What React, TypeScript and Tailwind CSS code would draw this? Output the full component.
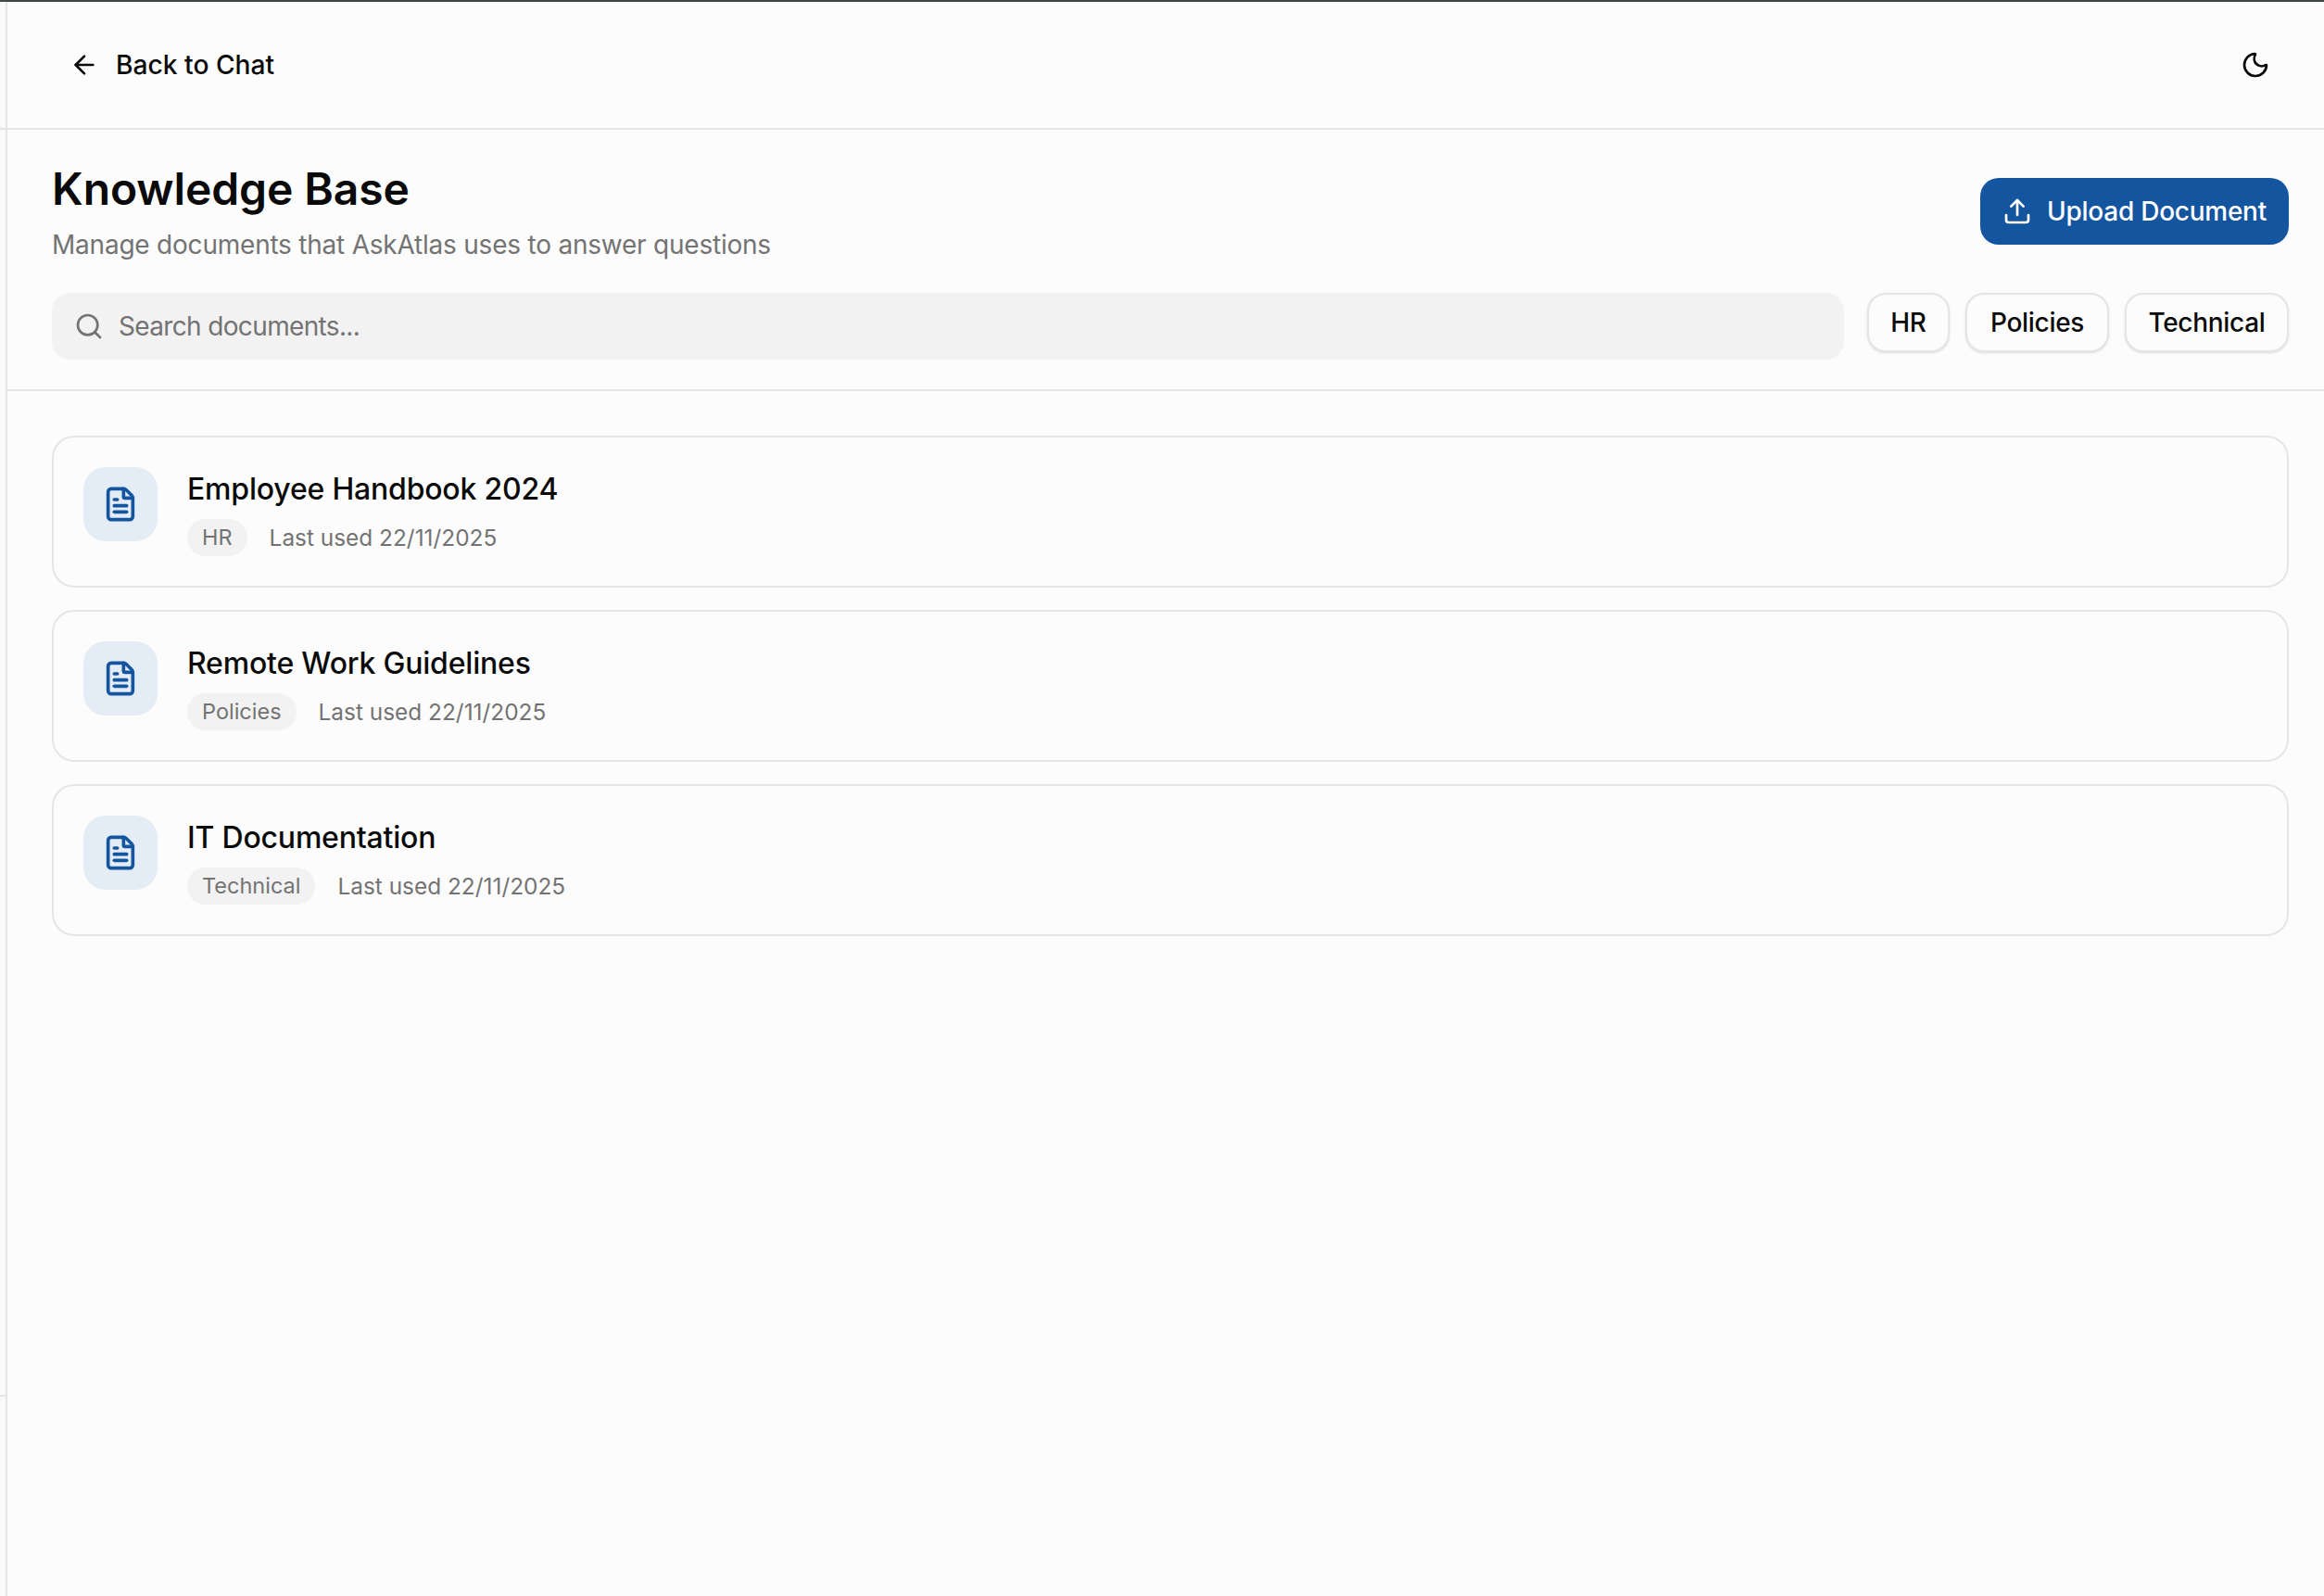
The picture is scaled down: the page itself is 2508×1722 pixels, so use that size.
import React from "react";
import { ArrowLeft, Moon, Search, Upload, FileText } from "lucide-react";

const docs = [
  { name: "Employee Handbook 2024", tag: "HR" },
  { name: "Remote Work Guidelines", tag: "Policies" },
  { name: "IT Documentation", tag: "Technical" },
];

const filters = [
  { label: "HR", width: "w-[89px]" },
  { label: "Policies", width: "w-[155px]" },
  { label: "Technical", width: "w-[177px]" },
];

const App = () => {
  return (
    <div className="h-[1722px] w-[2508px] overflow-hidden flex flex-col bg-[#fcfcfc] text-[#0a0a0a] font-['Inter',sans-serif]">
      <div className="h-[2px] bg-[#3f4a48] shrink-0" />
      <div className="flex flex-1 min-h-0">
        {/* collapsed sidebar edge */}
        <aside className="w-[8px] shrink-0 flex flex-col bg-[#fafafa] border-r-2 border-[#e5e5e5]">
          <div className="h-[138px] border-b-2 border-[#e5e5e5] shrink-0" />
          <div className="h-[1367px] border-b-2 border-[#e5e5e5] shrink-0" />
        </aside>

        <main className="flex-1 min-w-0 flex flex-col">
          <header className="h-[138px] shrink-0 border-b-2 border-[#e5e5e5] pl-[67px] pr-[58px] flex items-center justify-between">
            <div className="flex items-center gap-[18px]">
              <ArrowLeft size={32} strokeWidth={2} />
              <span className="text-[28.2px] font-medium">Back to Chat</span>
            </div>
            <Moon size={32} strokeWidth={2} />
          </header>

          <section className="h-[282px] shrink-0 border-b-2 border-[#e5e5e5] pl-[48px] pr-[38px] pt-[36px]">
            <div className="flex items-start justify-between">
              <div>
                <h1 className="text-[48px] leading-[56px] font-semibold tracking-[-0.1px]">Knowledge Base</h1>
                <p className="mt-[12px] text-[28px] leading-[40px] tracking-[-0.22px] text-[#737373]">
                  Manage documents that AskAtlas uses to answer questions
                </p>
              </div>
              <button className="mt-[16px] h-[72px] px-[24px] rounded-[20px] bg-[#1455a0] text-white flex items-center gap-[16px]">
                <Upload size={32} strokeWidth={2} />
                <span className="text-[28px] font-medium tracking-[-0.25px]">Upload Document</span>
              </button>
            </div>
            <div className="mt-[32px] flex gap-[25px]">
              <div className="flex-1 h-[72px] rounded-[20px] bg-[#f2f2f2] flex items-center pl-[24px] gap-[16px] text-[#737373]">
                <Search size={32} strokeWidth={2} />
                <span className="text-[28px] tracking-[-0.65px]">Search documents...</span>
              </div>
              <div className="flex gap-[17px] items-start">
                {filters.map((f) => (
                  <div
                    key={f.label}
                    className={`${f.width} h-[64px] rounded-[20px] border-2 border-[#e5e5e5] bg-[#fcfcfc] shadow-sm flex items-center justify-center text-[28px] tracking-[-0.3px] font-medium`}
                  >
                    {f.label}
                  </div>
                ))}
              </div>
            </div>
          </section>

          <div className="pl-[48px] pr-[38px] pt-[48px] flex flex-col gap-[24px]">
            {docs.map((d) => (
              <div
                key={d.name}
                className="h-[164px] rounded-[24px] border-2 border-[#e5e5e5] p-[32px] flex gap-[32px]"
              >
                <div className="w-[80px] h-[80px] rounded-[24px] bg-[#e4ecf5] flex items-center justify-center text-[#1455a0]">
                  <FileText size={40} strokeWidth={2.2} />
                </div>
                <div>
                  <div className="text-[32px] leading-[48px] font-medium tracking-[-0.2px]">{d.name}</div>
                  <div className="mt-[8px] flex items-center gap-[24px]">
                    <span className="h-[40px] px-[16px] rounded-full bg-[#f2f2f2] text-[#737373] text-[23.5px] flex items-center">
                      {d.tag}
                    </span>
                    <span className="text-[24.4px] text-[#737373]">Last used 22/11/2025</span>
                  </div>
                </div>
              </div>
            ))}
          </div>
        </main>
      </div>
    </div>
  );
};

export default App;
